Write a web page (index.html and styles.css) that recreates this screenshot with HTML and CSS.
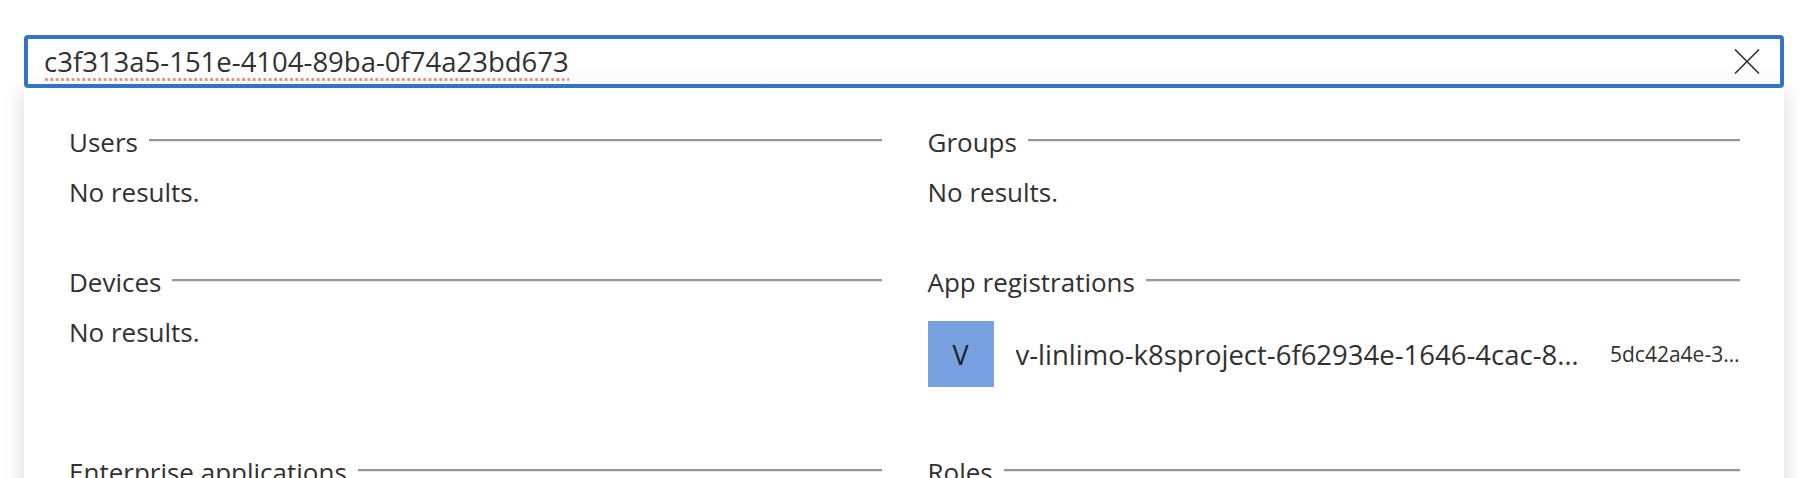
FILE: index.html
```html
<!DOCTYPE html>
<html lang="en">
<head>
<meta charset="utf-8">
<title>Search</title>
<link rel="stylesheet" href="styles.css">
</head>
<body>
<div class="search">
  <div class="box">
    <div class="field"><span class="query">c3f313a5-151e-4104-89ba-0f74a23bd673</span></div>
    <svg class="clear" width="26" height="25" viewBox="0 0 26 25" aria-hidden="true">
      <path d="M1 0.5 L25 24.5 M25 0.5 L1 24.5" stroke="#323130" stroke-width="1.6" fill="none"/>
    </svg>
  </div>
  <div class="panel">
    <div class="grid">
      <section class="group">
        <div class="head"><span class="title">Users</span><i class="rule"></i></div>
        <div class="empty">No results.</div>
      </section>
      <section class="group">
        <div class="head"><span class="title">Groups</span><i class="rule"></i></div>
        <div class="empty">No results.</div>
      </section>
      <section class="group">
        <div class="head"><span class="title">Devices</span><i class="rule"></i></div>
        <div class="empty">No results.</div>
      </section>
      <section class="group">
        <div class="head"><span class="title">App registrations</span><i class="rule"></i></div>
        <div class="item">
          <div class="avatar">V</div>
          <div class="name">v-linlimo-k8sproject-6f62934e-1646-4cac-8d2f-5a7c1e9b0f42</div>
          <div class="id">5dc42a4e-3b1f-4c8e-9a2d-7e6f0b1c4d23</div>
        </div>
      </section>
      <section class="group">
        <div class="head"><span class="title">Enterprise applications</span><i class="rule"></i></div>
        <div class="empty">No results.</div>
      </section>
      <section class="group">
        <div class="head"><span class="title">Roles</span><i class="rule"></i></div>
        <div class="empty">No results.</div>
      </section>
    </div>
  </div>
</div>
</body>
</html>
```

FILE: styles.css
```css
html, body {
  margin: 0;
  padding: 0;
  background: #ffffff;
  overflow: hidden;
}

body {
  font-family: "Open Sans", "Noto Sans", "Liberation Sans", sans-serif;
  color: #323130;
}

.search {
  margin: 35px 16px 0 24px;
  width: 1760px;
}

.box {
  box-sizing: border-box;
  height: 53px;
  border: 4px solid #3474c5;
  border-radius: 4px;
  background: linear-gradient(#ffffff 60%, #fafafa);
  display: flex;
  align-items: center;
  padding: 0 20px 0 16px;
  position: relative;
  z-index: 2;
}

.field {
  flex: 1;
  min-width: 0;
}

.query {
  position: relative;
  display: inline-block;
  font-size: 27.5px;
  line-height: 40px;
  color: #323130;
  white-space: nowrap;
}

.query::after {
  content: "";
  position: absolute;
  left: 1px;
  right: 0;
  bottom: 1px;
  height: 3px;
  background-image: radial-gradient(circle at 1.4px 1.5px, #f2867b 1.3px, transparent 1.6px);
  background-size: 5.33px 3px;
  background-repeat: repeat-x;
}

.clear {
  display: block;
  flex: none;
}

.panel {
  background: #ffffff;
  box-shadow: 0 4px 22px rgba(0, 0, 0, 0.16);
  padding: 34px 44px 40px 45px;
  height: 600px;
}

.grid {
  display: grid;
  grid-template-columns: 1fr 1fr;
  column-gap: 46px;
}

.group {
  margin-bottom: 50px;
  min-width: 0;
}

.head {
  display: flex;
  align-items: center;
  gap: 11px;
  height: 40px;
  margin-bottom: 10px;
}

.title {
  font-size: 26px;
  line-height: 40px;
  white-space: nowrap;
}

.rule {
  flex: 1;
  height: 0;
  border-top: 2px solid #979797;
  border-bottom: 1px solid #e4e4e4;
  margin-top: -4px;
}

.empty {
  font-size: 26px;
  line-height: 40px;
}

.item {
  display: flex;
  align-items: center;
  gap: 22px;
  padding: 9px 0 15px;
}

.avatar {
  flex: none;
  width: 66px;
  height: 66px;
  background: #77a1e1;
  color: #1f1f1f;
  font-size: 27px;
  display: flex;
  align-items: center;
  justify-content: center;
}

.name {
  flex: 1;
  min-width: 0;
  font-size: 27.5px;
  white-space: nowrap;
  overflow: hidden;
  text-overflow: ellipsis;
}

.id {
  flex: none;
  width: 130px;
  font-size: 21px;
  white-space: nowrap;
  overflow: hidden;
  text-overflow: ellipsis;
}
```
